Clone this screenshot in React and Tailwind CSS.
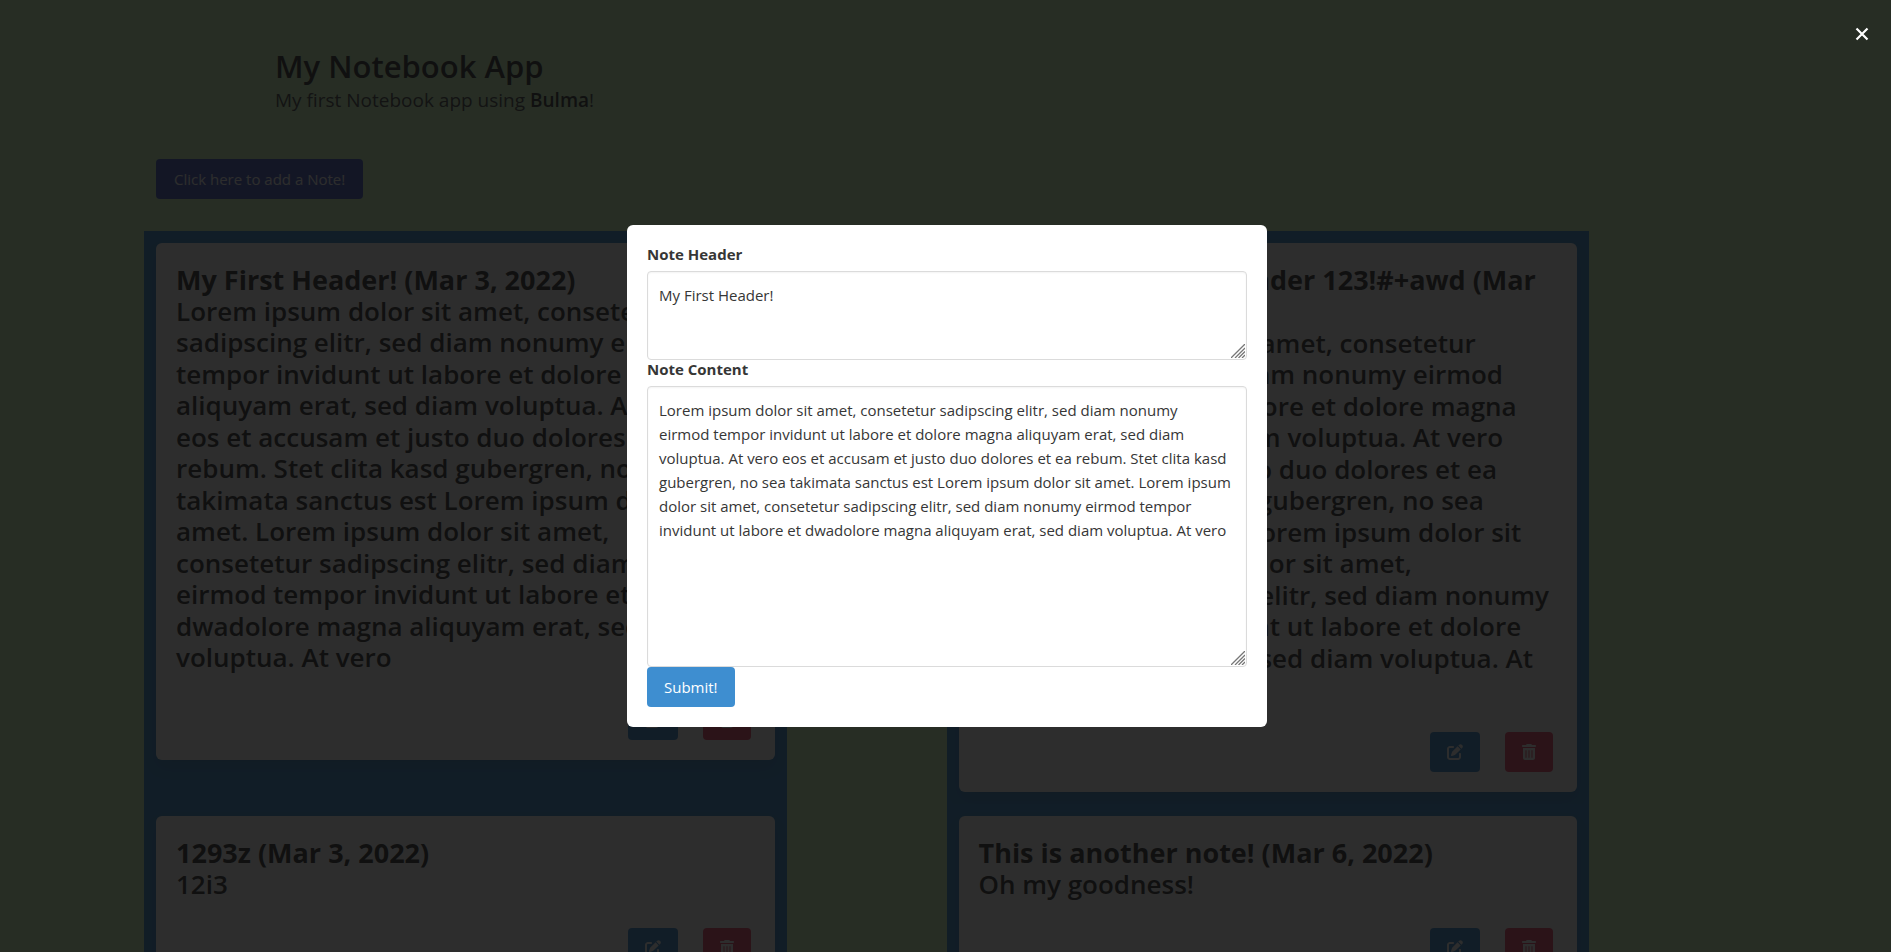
import { FaPenToSquare, FaTrashCan } from "react-icons/fa6";

const notes = [
  {
    title: "My First Header! (Mar 3, 2022)",
    body: "Lorem ipsum dolor sit amet, consetetur\nsadipscing elitr, sed diam nonumy eirmod\ntempor invidunt ut labore et dolore magna\naliquyam erat, sed diam voluptua. At vero\neos et accusam et justo duo dolores et ea\nrebum. Stet clita kasd gubergren, no sea\ntakimata sanctus est Lorem ipsum dolor sit\namet. Lorem ipsum dolor sit amet,\nconsetetur sadipscing elitr, sed diam nonumy\neirmod tempor invidunt ut labore et\ndwadolore magna aliquyam erat, sed diam\nvoluptua. At vero",
  },
  {
    title: "This is my second header 123!#+awd (Mar\n3, 2022)",
    body: "Lorem ipsum dolor sit amet, consetetur\nsadipscing elitr, sed diam nonumy eirmod\ntempor invidunt ut labore et dolore magna\naliquyam erat, sed diam voluptua. At vero\neos et accusam et justo duo dolores et ea\nrebum. Stet clita kasd gubergren, no sea\ntakimata sanctus est Lorem ipsum dolor sit\namet. Lorem ipsum dolor sit amet,\nconsetetur sadipscing elitr, sed diam nonumy\neirmod tempor invidunt ut labore et dolore\nmagna aliquyam erat, sed diam voluptua. At\nvero",
  },
  { title: "1293z (Mar 3, 2022)", body: "12i3" },
  { title: "This is another note! (Mar 6, 2022)", body: "Oh my goodness!" },
];

const content =
  "Lorem ipsum dolor sit amet, consetetur sadipscing elitr, sed diam nonumy\neirmod tempor invidunt ut labore et dolore magna aliquyam erat, sed diam\nvoluptua. At vero eos et accusam et justo duo dolores et ea rebum. Stet clita kasd\ngubergren, no sea takimata sanctus est Lorem ipsum dolor sit amet. Lorem ipsum\ndolor sit amet, consetetur sadipscing elitr, sed diam nonumy eirmod tempor\ninvidunt ut labore et dwadolore magna aliquyam erat, sed diam voluptua. At vero";

function Note({ title, body }) {
  return (
    <div className="bg-[#3e8ed0] p-3">
      <article className="rounded-md bg-white px-5 pb-5 pt-[21px] shadow-[0_8px_16px_-2px_rgba(10,10,10,0.1)]">
        <div className="whitespace-pre text-[#363636]">
          <h2 className="text-[27px]/[32px] font-bold">{title}</h2>
          <p className="text-[26px] leading-[1.21] font-semibold">{body}</p>
        </div>
        <div className="mt-[27px] flex justify-end gap-[25px] pr-1 text-base text-white">
          <button type="button" aria-label="Edit note" className="flex h-10 w-[50px] items-center justify-center rounded bg-[#3e8ed0]">
            <FaPenToSquare />
          </button>
          <button type="button" aria-label="Delete note" className="flex h-10 w-12 items-center justify-center rounded bg-[#f14668]">
            <FaTrashCan />
          </button>
        </div>
      </article>
    </div>
  );
}

function Field({ id, label, value, size }) {
  return (
    <div>
      <label htmlFor={id} className="mb-2 block text-[15px]/[18px] font-bold">
        {label}
      </label>
      <div className="relative">
        <textarea
          id={id}
          defaultValue={value}
          className={`block w-full resize-none overflow-hidden whitespace-pre rounded border border-[#dbdbdb] p-[11px] text-[15px]/[24px] shadow-[inset_0_1px_2px_rgba(10,10,10,0.05)] outline-none ${size}`}
        />
        <svg className="absolute bottom-[2px] right-[2px] size-[14px]" viewBox="0 0 14 14" stroke="#777" strokeWidth="1.3" aria-hidden="true">
          <path d="M0 14 14 0M4 14 14 4M7.5 14 14 7.5M11 14 14 11" />
        </svg>
      </div>
    </div>
  );
}

export default function App() {
  return (
    <div className="h-screen overflow-hidden bg-[#d0ffc0] font-['Open_Sans','Noto_Sans',sans-serif] text-[#363636]">
      <header className="pl-[275px] pt-12">
        <h1 className="text-[31px]/[36px] font-semibold">My Notebook App</h1>
        <p className="text-[19px]/[32px] text-[#4a4a4a]">
          My first Notebook app using <strong className="font-semibold text-[#363636]">Bulma</strong>!
        </p>
      </header>
      <main className="ml-36 mr-[302px] mt-[43px]">
        <button type="button" className="ml-3 h-10 rounded bg-[#485fc7] px-[18px] text-[15px] text-white">
          Click here to add a Note!
        </button>
        <div className="mt-8 grid grid-cols-2 gap-x-40">
          {notes.map((note) => (
            <Note key={note.title} {...note} />
          ))}
        </div>
      </main>

      <div className="fixed inset-0 flex items-center justify-center bg-[rgba(10,10,10,0.86)] pl-[3px]">
        <form className="w-[640px] rounded-md bg-white p-5" role="dialog" aria-label="Edit note" onSubmit={(e) => e.preventDefault()}>
          <Field id="note-header" label="Note Header" value="My First Header!" size="h-[89px]" />
          <Field id="note-content" label="Note Content" value={content} size="h-[281px]" />
          <button type="submit" className="block h-10 rounded bg-[#3e8ed0] px-[17px] text-[15px] text-white">
            Submit!
          </button>
        </form>
        <button type="button" aria-label="Close" className="absolute right-[13px] top-[18px] flex size-8 items-center justify-center text-white">
          <svg className="size-[14px]" viewBox="0 0 14 14" stroke="currentColor" strokeWidth="2.2" aria-hidden="true">
            <path d="M1.5 1.5 12.5 12.5M12.5 1.5 1.5 12.5" />
          </svg>
        </button>
      </div>
    </div>
  );
}
